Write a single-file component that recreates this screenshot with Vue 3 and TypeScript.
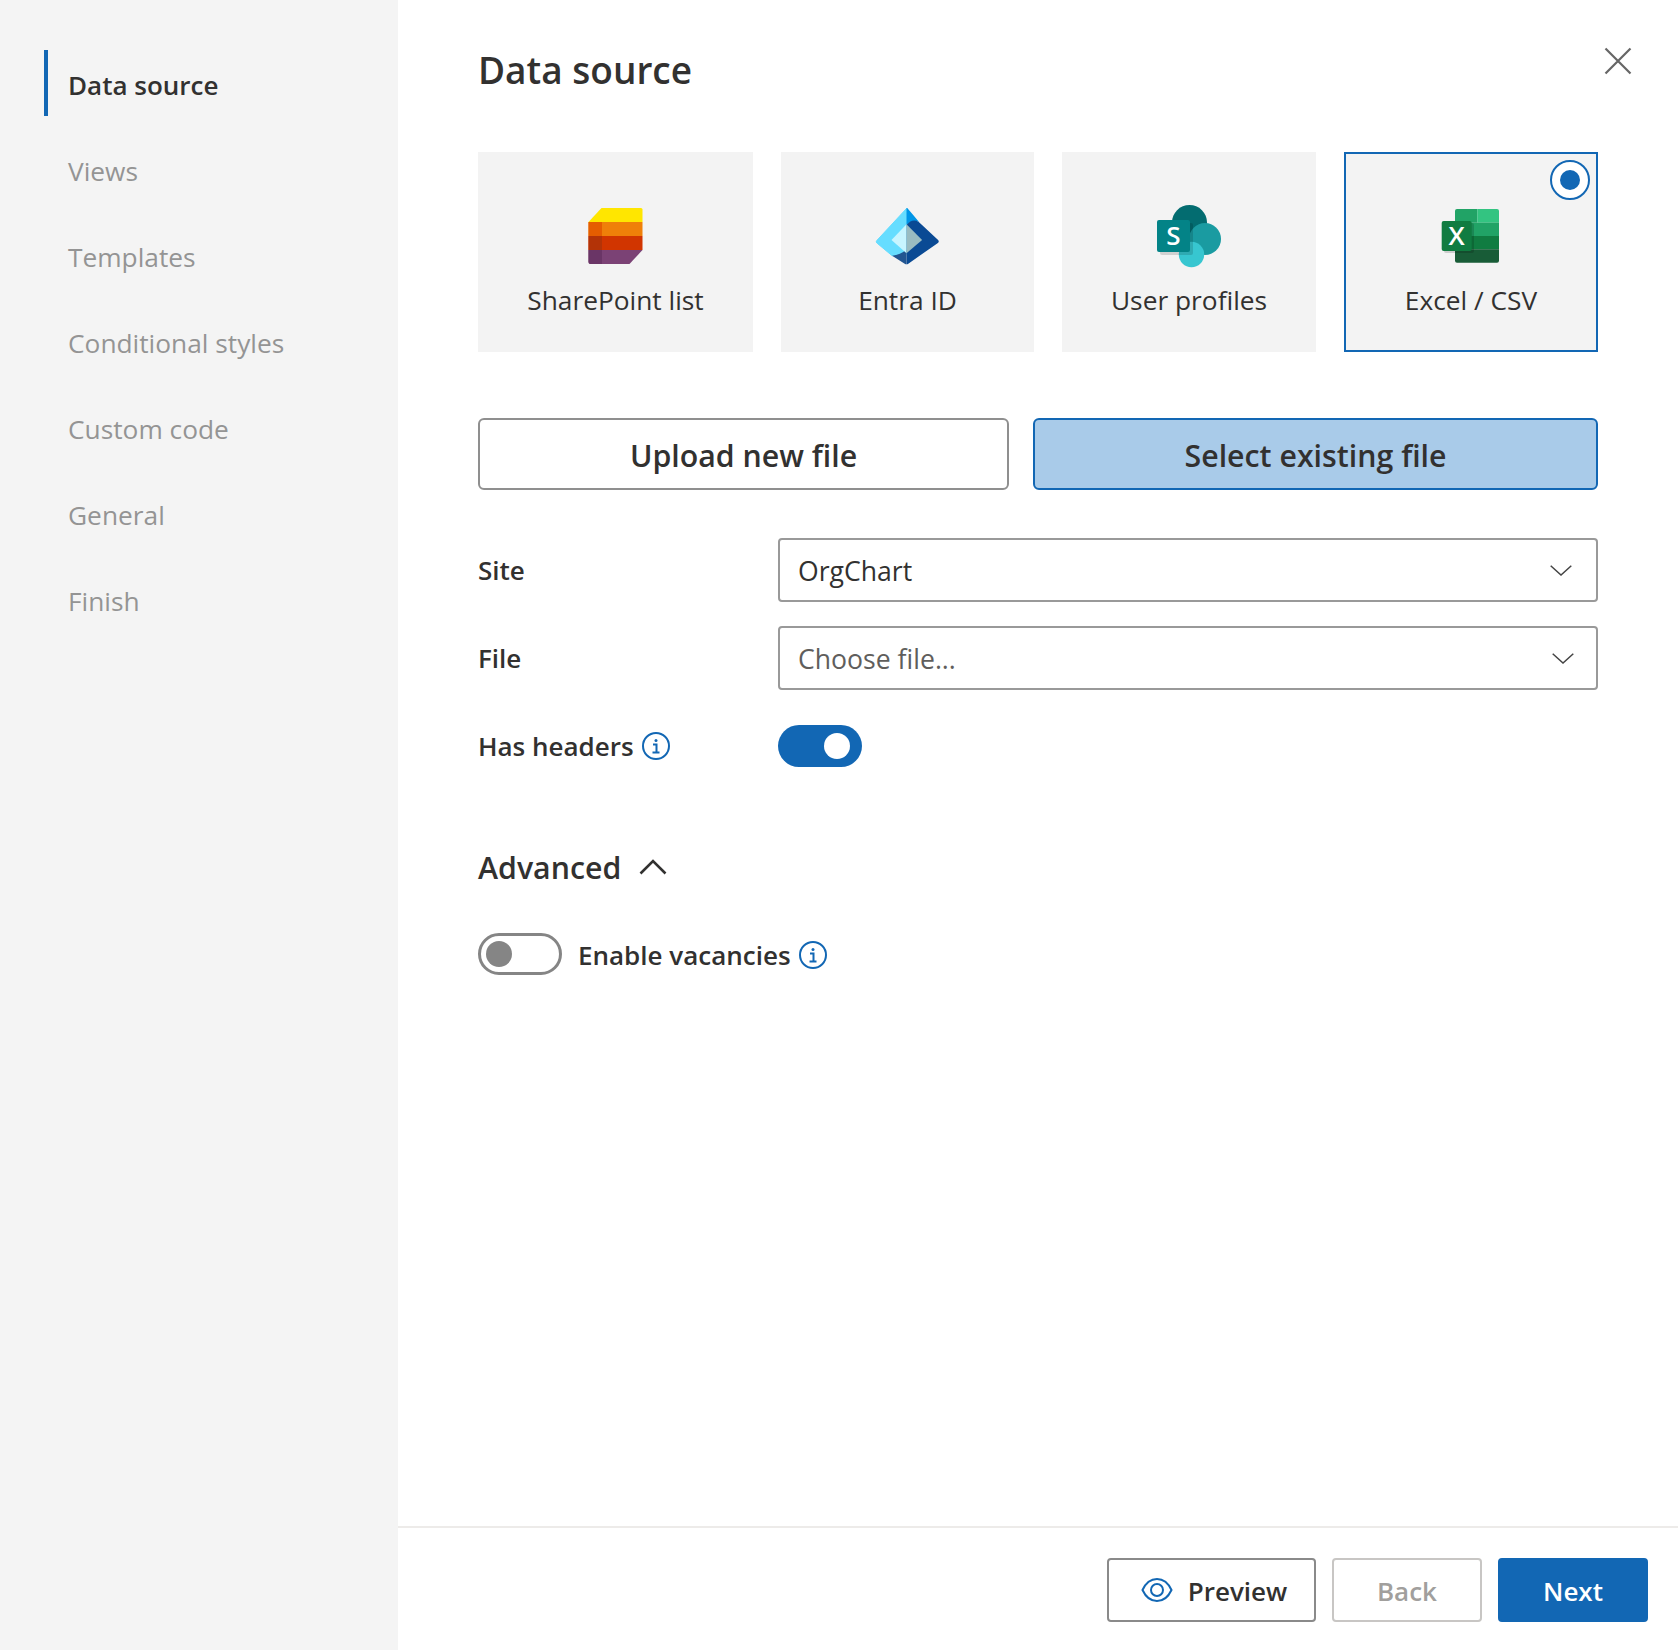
<script setup lang="ts">
const steps: string[] = ['Data source', 'Views', 'Templates', 'Conditional styles', 'Custom code', 'General', 'Finish']
</script>

<template>
  <div class="shell">
    <aside class="side">
      <nav class="nav">
        <div v-for="(s, i) in steps" :key="s" class="step" :class="{ active: i === 0 }">{{ s }}</div>
      </nav>
    </aside>
    <main class="main">
      <div class="content">
        <header class="head">
          <h1 class="title">Data source</h1>
          <button class="close" aria-label="Close">
            <svg width="28" height="28" viewBox="0 0 28 28"><path d="M1.500 1.500 26.500 26.500M26.500 1.500 1.500 26.500" fill="none" stroke="#666" stroke-width="2.200" /></svg>
          </button>
        </header>

        <section class="cards">
          <div class="card">
            <svg class="logo" viewBox="0 0 80 70">
              <path d="M25.500 6H65a1.500 1.500 0 0 1 1.500 1.500V20h-54z" fill="#ffe600" />
              <rect x="12.500" y="20" width="54" height="14" fill="#ef8009" />
              <rect x="12.500" y="20" width="13.500" height="14" fill="#e55d00" />
              <rect x="12.500" y="34" width="54" height="14" fill="#d13500" />
              <rect x="12.500" y="34" width="13.500" height="14" fill="#b33307" />
              <path d="M12.500 48h54L53.500 62H14.500a2 2 0 0 1-2-2z" fill="#7b4275" />
              <path d="M12.500 48H26v14H14.500a2 2 0 0 1-2-2z" fill="#6a3566" />
            </svg>
            <span class="card-label">SharePoint list</span>
          </div>
          <div class="card">
            <svg class="logo" viewBox="0 0 80 70">
              <g transform="translate(-0.700 0)">
                <path d="M39.200 6.500 9.500 38.500a1.800 1.800 0 0 0 .3 2.700L24.800 53.700 39.200 52z" fill="#66ddff" stroke="#66ddff" stroke-width="1" stroke-linejoin="round" />
                <path d="M39.200 6C40 6 40.600 6.600 41 7.200L51.800 20Q45 17 39.200 23z" fill="#0095e6" />
                <path d="M39.200 23Q45 16 51.500 20L70.800 38a2 2 0 0 1-.2 2.900L41 61.700a3 3 0 0 1-1.800.6z" fill="#0a4a94" />
                <path d="M24.800 53.700Q33 53 39.200 47.500V62.300a3 3 0 0 1-1.800-.6z" fill="#225591" />
                <path d="M39.200 22.300 24.200 38 39.200 51.300z" fill="#c8f5ff" />
                <path d="M39.200 22.300 54.800 38 39.200 51.300z" fill="#9abcc1" />
              </g>
            </svg>
            <span class="card-label">Entra ID</span>
          </div>
          <div class="card">
            <svg class="logo" viewBox="0 0 80 70">
              <circle cx="40.500" cy="20.500" r="17.500" fill="#036c70" />
              <circle cx="56" cy="37" r="16" fill="#1a9ba1" />
              <circle cx="42.500" cy="52.500" r="12.700" fill="#37c6d0" />
              <rect x="11" y="21" width="33" height="32" rx="2" fill="#000" opacity=".14" />
              <rect x="8" y="18" width="33" height="32" rx="2" fill="#038387" />
              <text x="24.500" y="43" class="logo-letter" text-anchor="middle">S</text>
            </svg>
            <span class="card-label">User profiles</span>
          </div>
          <div class="card selected">
            <span class="radio"><span class="dot"></span></span>
            <svg class="logo" viewBox="0 0 80 70">
              <path d="M26 7H46.300V20.700H24V9a2 2 0 0 1 2-2z" fill="#21a366" />
              <path d="M46.300 7H66a2 2 0 0 1 2 2V20.700H46.300z" fill="#33c481" />
              <rect x="24" y="20.700" width="44" height="13.300" fill="#21a366" />
              <rect x="24" y="34" width="44" height="13.300" fill="#107c41" />
              <path d="M24 47.300H68V58.700a2 2 0 0 1-2 2H26a2 2 0 0 1-2-2z" fill="#185c37" />
              <rect x="13" y="21" width="30" height="30" rx="2" fill="#000" opacity=".16" />
              <rect x="10.700" y="19" width="30" height="30" rx="2" fill="#107c41" />
              <text x="25.700" y="43" class="logo-letter" text-anchor="middle">X</text>
            </svg>
            <span class="card-label">Excel / CSV</span>
          </div>
        </section>

        <section class="modes">
          <button class="mode upload">Upload new file</button>
          <button class="mode existing">Select existing file</button>
        </section>

        <section class="form">
          <label class="label">Site</label>
          <div class="select">
            <span>OrgChart</span>
            <svg class="chev" width="22" height="11" viewBox="0 0 22 11"><path d="M.7.7 11 10 21.300.7" fill="none" stroke="#444" stroke-width="1.500" /></svg>
          </div>
          <label class="label">File</label>
          <div class="select placeholder">
            <span>Choose file...</span>
            <svg class="chev chev-file" width="22" height="11" viewBox="0 0 22 11"><path d="M.7.7 11 10 21.300.7" fill="none" stroke="#444" stroke-width="1.500" /></svg>
          </div>
          <label class="label with-info">
            Has headers
            <svg class="info" viewBox="0 0 28 28"><circle cx="14" cy="14" r="13" fill="none" stroke="#1267b4" stroke-width="2" /><circle cx="14" cy="8.500" r="1.500" fill="#1267b4" /><path d="M11 12.500h3.500v7.500M10.500 20.500h7" fill="none" stroke="#1267b4" stroke-width="2" /></svg>
          </label>
          <div class="toggle-cell">
            <span class="toggle on"><span class="thumb"></span></span>
          </div>
        </section>

        <div class="advanced">
          <span>Advanced</span>
          <svg width="28" height="16" viewBox="0 0 28 16"><path d="M1.500 14.500 14 2 26.500 14.500" fill="none" stroke="#323130" stroke-width="2.600" /></svg>
        </div>

        <div class="vacancy">
          <span class="toggle off"><span class="thumb"></span></span>
          <span class="label">Enable vacancies</span>
          <svg class="info" viewBox="0 0 28 28"><circle cx="14" cy="14" r="13" fill="none" stroke="#1267b4" stroke-width="2" /><circle cx="14" cy="8.500" r="1.500" fill="#1267b4" /><path d="M11 12.500h3.500v7.500M10.500 20.500h7" fill="none" stroke="#1267b4" stroke-width="2" /></svg>
        </div>
      </div>

      <footer class="foot">
        <button class="btn preview">
          <svg width="32" height="26" viewBox="0 0 32 26"><path d="M1.500 13C5 5.500 10 2 16 2s11 3.500 14.500 11C27 20.500 22 24 16 24S5 20.500 1.500 13z" fill="none" stroke="#1267b4" stroke-width="2" /><circle cx="16" cy="13" r="6" fill="none" stroke="#1267b4" stroke-width="2" /></svg>
          Preview
        </button>
        <button class="btn back">Back</button>
        <button class="btn next">Next</button>
      </footer>
    </main>
  </div>
</template>

<style scoped>
* { box-sizing: border-box; }
.shell {
  display: flex;
  width: 1678px;
  height: 1650px;
  font-family: "Open Sans", "Noto Sans", sans-serif;
  color: #323130;
  background: #fff;
  overflow: hidden;
}
.side { width: 398px; flex: none; background: #f4f4f4; padding: 50px 0 0 44px; }
.nav { display: flex; flex-direction: column; gap: 20px; }
.step {
  height: 66px;
  display: flex;
  align-items: center;
  padding: 3px 0 0 20px;
  border-left: 4px solid transparent;
  font-size: 26.300px;
  color: #949494;
}
.step.active { border-left-color: #1267b4; color: #323130; font-weight: 600; font-size: 26px; }

.main { flex: 1; display: flex; flex-direction: column; min-width: 0; }
.content { flex: 1; padding: 40px 80px 0; }
.head { display: flex; justify-content: space-between; align-items: flex-start; height: 60px; }
.title { margin: 0; font-size: 37px; line-height: 60px; font-weight: 600; }
.close { all: unset; display: block; width: 28px; height: 28px; margin: 7px -34px 0 0; }
.close svg { display: block; }

.cards { display: grid; grid-template-columns: 275px 253px 254px 254px; gap: 28px; margin-top: 52px; }
.card {
  position: relative;
  height: 200px;
  background: #f3f3f3;
  display: flex;
  flex-direction: column;
  align-items: center;
  padding-top: 50px;
}
.card.selected { border: 2px solid #1267b4; padding-top: 48px; }
.logo { width: 80px; height: 70px; flex: none; display: block; }
.logo-letter { font: 600 26px "Open Sans", sans-serif; fill: #fff; }
.card-label { margin-top: 10px; font-size: 26.300px; line-height: 36px; }
.radio {
  position: absolute;
  top: 6px;
  right: 6px;
  width: 40px;
  height: 40px;
  border-radius: 50%;
  background: #fff;
  border: 2px solid #1267b4;
  display: flex;
  align-items: center;
  justify-content: center;
}
.dot { width: 20px; height: 20px; border-radius: 50%; background: #1267b4; }

.modes { display: grid; grid-template-columns: 531px 1fr; gap: 24px; margin-top: 66px; }
.mode {
  height: 72px;
  border-radius: 6px;
  border: 2px solid #8f8f8f;
  background: #fff;
  font: 600 30.300px "Open Sans", sans-serif;
  color: #323130;
  padding-top: 4px;
}
.mode.existing { background: #a9cbe9; border-color: #1267b4; }

.form { display: grid; grid-template-columns: 300px 1fr; grid-auto-rows: 64px; row-gap: 24px; margin-top: 48px; }
.label { display: flex; align-items: center; font-size: 26px; font-weight: 600; }
.with-info { gap: 8px; }
.info { width: 28px; height: 28px; flex: none; display: block; }
.select {
  display: flex;
  align-items: center;
  justify-content: space-between;
  border: 2px solid #999;
  border-radius: 4px;
  padding: 2px 24px 0 18px;
  font-size: 26.600px;
}
.chev { display: block; flex: none; margin-top: -2px; }
.chev-file { margin-right: -2px; }
.placeholder { color: #605e5c; }
.toggle-cell { display: flex; align-items: center; }

.toggle { display: flex; align-items: center; width: 84px; height: 42px; border-radius: 21px; flex: none; }
.thumb { width: 26px; height: 26px; border-radius: 50%; }
.toggle.on { background: #1267b4; justify-content: flex-end; padding-right: 12px; }
.toggle.on .thumb { background: #fff; }
.toggle.off { border: 3px solid #858585; padding-left: 5px; }
.toggle.off .thumb { background: #858585; }

.advanced { display: flex; align-items: center; gap: 18px; height: 50px; margin-top: 64px; font-size: 30.300px; font-weight: 600; }
.advanced svg { display: block; flex: none; }
.vacancy { display: flex; align-items: center; height: 42px; margin-top: 41px; }
.vacancy .label { margin: 0 8px 0 16px; padding-top: 2px; }
.vacancy .info { margin-top: 2px; }

.foot {
  flex: none;
  height: 124px;
  border-top: 2px solid #edebe9;
  display: flex;
  justify-content: flex-end;
  gap: 16px;
  padding: 30px 30px 0 0;
}
.btn {
  height: 64px;
  border-radius: 4px;
  border: 2px solid #8a8a8a;
  background: #fff;
  font: 600 26px "Open Sans", sans-serif;
  color: #323130;
  display: flex;
  align-items: center;
  justify-content: center;
  padding-top: 2px;
}
.preview { width: 209px; gap: 15px; padding-left: 11px; }
.preview svg { margin-top: -2px; }
.back { width: 150px; border-color: #c8c6c4; color: #a19f9d; }
.next { width: 150px; background: #1267b4; border-color: #1267b4; color: #fff; }
</style>
